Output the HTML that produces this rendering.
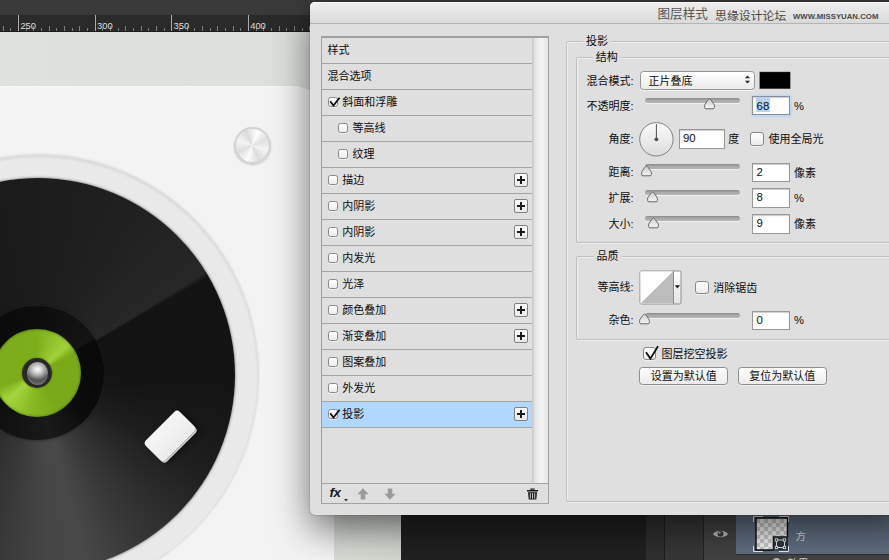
<!DOCTYPE html>
<html lang="zh-CN">
<head>
<meta charset="utf-8">
<title>图层样式</title>
<style>
*{box-sizing:border-box;margin:0;padding:0}
html,body{width:889px;height:560px;overflow:hidden;background:#dde1db}
body{position:relative;font-family:"Liberation Sans","Noto Sans CJK SC",sans-serif;font-size:11px;color:#0e0e0e;line-height:12px}
.abs{position:absolute}
i{display:block}
/* ---------- photoshop backdrop ---------- */
#topbar{left:0;top:0;width:889px;height:15px;background:#3a3a3a}
#canvas{left:0;top:32px;width:401px;height:528px;background:linear-gradient(90deg,#dee2dc 0,#dce0da 300px,#d3d8d1 401px)}
#card{left:-60px;top:87px;width:394px;height:520px;background:#f3f3f3;border-radius:0 44px 0 0;box-shadow:0 -1px 0 #f9f9f9}
#ring{left:-181.5px;top:154.5px;width:439px;height:439px;border-radius:50%;background:radial-gradient(circle at 50% 50%,#e9e9e9 89%,#e7e7e7 92%,#dcdcdc 97%,#d2d2d2 100%);box-shadow:0 0 3px rgba(0,0,0,.22), inset 0 2px 3px rgba(0,0,0,.08)}
#disc{left:-159.5px;top:178px;width:394px;height:394px;border-radius:50%;background:conic-gradient(from 0deg at 50% 50%,#1c1c1c 0deg,#202020 30deg,#272727 58.5deg,#131313 60deg,#141414 95deg,#1e1e1e 120deg,#333 145deg,#484848 166deg,#464646 176deg,#333 200deg,#262626 225deg,#2b2b2b 238.5deg,#141414 240deg,#161616 300deg,#1c1c1c 360deg);box-shadow:0 0 3px rgba(0,0,0,.6)}
#lab0{left:-30px;top:306px;width:134px;height:134px;border-radius:50%;background:conic-gradient(from 0deg,#0c0c0c 0deg,#141414 58deg,#090909 60deg,#0b0b0b 130deg,#1a1a1a 168deg,#0f0f0f 220deg,#0a0a0a 240deg,#0c0c0c 360deg);box-shadow:0 0 3px rgba(0,0,0,.9),0 0 0 1.5px rgba(255,255,255,.05)}
#green{left:-7px;top:329px;width:88px;height:88px;border-radius:50%;background:conic-gradient(from 0deg,#7dae1b 0deg,#a2d238 48deg,#7aaa18 62deg,#79a918 150deg,#88ba22 190deg,#a6d63d 228deg,#7cac1a 250deg,#7dae1b 360deg);box-shadow:inset 0 0 3px rgba(40,70,0,.7)}
#spd{left:22px;top:358px;width:30px;height:30px;border-radius:50%;background:radial-gradient(circle at 50% 50%,#222 0,#2a2a2a 75%,#4d5a2a 100%);box-shadow:0 0 2px rgba(60,90,10,.8)}
#ball{left:26.5px;top:362px;width:21.5px;height:23px;border-radius:50%;background:radial-gradient(ellipse 60% 45% at 50% 32%,#ffffff 0,#d2d2d2 35%,rgba(120,120,120,0) 100%),radial-gradient(circle at 50% 50%,#6d6d6d 0,#555 55%,#8e8e8e 85%,#3a3a3a 100%)}
#knob{left:234px;top:126.5px;width:37px;height:37px;border-radius:50%;background:conic-gradient(from 20deg,#fdfdfd 0deg,#e0e0e0 45deg,#f4f4f4 90deg,#dcdcdc 135deg,#fcfcfc 180deg,#dedede 225deg,#f4f4f4 270deg,#dcdcdc 315deg,#fdfdfd 360deg);border:2px solid #d3d3d3;box-shadow:0 1px 2px rgba(0,0,0,.2)}
#head{left:146.4px;top:421.5px;width:48px;height:28px;border-radius:4px;background:linear-gradient(180deg,#f6f6f6,#ececec);transform:rotate(-45deg);box-shadow:0 2px 0 #c9c9c9,2px 4px 5px rgba(0,0,0,.55)}
/* dark panels at bottom right */
#dk1{left:401px;top:500px;width:245px;height:60px;background:#202020}
#dk2{left:646px;top:500px;width:19px;height:60px;background:#2f2f2f}
#dk3{left:664px;top:500px;width:39px;height:60px;background:#373737;border-left:1px solid #1d1d1d}
#dk4{left:703px;top:500px;width:33px;height:60px;background:#424242;border-left:1px solid #232323}
#lyr{left:736px;top:500px;width:153px;height:54px;background:#606e80}
#lyr2{left:736px;top:554px;width:153px;height:6px;background:#434343;border-top:1px solid #303030}
/* ---------- dialog ---------- */
#dlg{left:310px;top:2px;width:600px;height:513px;background:#dfdfdf;border-radius:5px 0 0 5px;box-shadow:0 14px 36px rgba(0,0,0,.55),0 0 1.5px rgba(0,0,0,.45)}
#tbar{left:0;top:0;width:600px;height:22px;border-radius:5px 0 0 0;background:linear-gradient(180deg,#eeeeee,#dadada);border-bottom:1px solid #b4b4b4;box-shadow:inset 0 1px 0 #f8f8f8}
.ttl{top:5px;left:347.5px;font-size:12.6px;line-height:14px;color:#565656;white-space:nowrap}
.wm1{top:6.8px;left:405px;font-size:11.9px;line-height:14px;color:#484848;white-space:nowrap}
.wm2{top:10.2px;left:482.6px;font-size:7.9px;line-height:10px;color:#4a4a4a;white-space:nowrap;letter-spacing:.02px;font-weight:bold;transform:scaleX(.985);transform-origin:0 0}
/* list */
#list{left:11px;top:34px;width:228px;height:468px;border:1px solid #a2a2a2;border-top:2px solid #a0a0a0;background:#dfdfdf;box-shadow:inset 0 1px 0 #c9c9c9}
#list .row{position:absolute;left:0;width:210px;height:26px;border-bottom:1px solid #a4a4a4;background:#dfdfdf}
#list .row span.t{position:absolute;top:5.7px;white-space:nowrap}
#list .row.sel{background:#b2d7fd}
.cb{position:absolute;width:10px;height:10px;border:1px solid #8a8a8a;border-radius:2.5px;background:linear-gradient(180deg,#ffffff,#ececec);box-shadow:0 1px 0 rgba(255,255,255,.5)}
.cb.big{width:13.5px;height:13.5px;border-radius:3px}
.plus{position:absolute;left:192px;top:5px;width:14px;height:14px;border:1px solid #808080;border-radius:2px;background:linear-gradient(180deg,#fdfdfd,#e9e9e9)}
.plus:before{content:"";position:absolute;left:2px;top:5px;width:8px;height:2px;background:#1c1c1c}
.plus:after{content:"";position:absolute;left:5px;top:2px;width:2px;height:8px;background:#1c1c1c}
#sbar{left:210px;top:0;width:16px;height:445px;background:linear-gradient(90deg,#c6c6c6 0,#e2e2e2 18%,#f1f1f1 45%,#f3f3f3 65%,#e3e3e3 100%)}
#tool{left:0;top:445px;width:226px;height:20px;border-top:1px solid #a4a4a4;background:#dfdfdf}
/* right groups */
.grp{border:1px solid #c0c0c0;border-radius:2px;box-shadow:inset 1px 1px 0 rgba(255,255,255,.5),1px 1px 0 rgba(255,255,255,.5)}
.glab{background:#dfdfdf;padding:0 3px;white-space:nowrap}
.lbl{white-space:nowrap;text-align:right}
.txt{white-space:nowrap}
.inp{background:#fff;border:1px solid #989898;box-shadow:inset 0 1px 1px rgba(0,0,0,.2);font-size:11.4px;line-height:14px;padding:0.8px 0 0 3.6px;height:19px;width:38px}
.trk{height:5px;border-radius:3px;background:linear-gradient(180deg,#8a8a8a,#a9a9a9 45%,#b6b6b6);box-shadow:0 1px 0 rgba(255,255,255,.55)}
.btn{height:18px;border:1px solid #8d8d8d;border-radius:3.5px;background:linear-gradient(180deg,#ffffff,#ececec);text-align:center;padding-top:2.5px;white-space:nowrap;box-shadow:0 1px 0 rgba(255,255,255,.5)}
</style>
</head>
<body>
<div id="canvas" class="abs"></div>
<div id="card" class="abs"></div>
<div id="ring" class="abs"></div>
<div id="disc" class="abs"></div>
<div id="lab0" class="abs"></div>
<div id="green" class="abs"></div>
<div id="spd" class="abs"></div>
<div id="ball" class="abs"></div>
<div id="knob" class="abs"></div>
<div id="head" class="abs"></div>
<div id="topbar" class="abs"></div>
<svg class="abs" style="left:0;top:15px" width="320" height="17" viewBox="0 0 320 17">
<rect width="320" height="17" fill="#2a2a2a"/>
<rect y="16" width="320" height="1" fill="#1a1a1a"/>
<rect x="-5" y="13" width="1" height="3" fill="#7e7e7e"/>
<rect x="3" y="11" width="1" height="5" fill="#7e7e7e"/>
<rect x="10" y="13" width="1" height="3" fill="#7e7e7e"/>
<rect x="18" y="0" width="1" height="16" fill="#ababab"/>
<rect x="26" y="13" width="1" height="3" fill="#7e7e7e"/>
<rect x="33" y="11" width="1" height="5" fill="#7e7e7e"/>
<rect x="41" y="13" width="1" height="3" fill="#7e7e7e"/>
<rect x="49" y="11" width="1" height="5" fill="#7e7e7e"/>
<rect x="56" y="13" width="1" height="3" fill="#7e7e7e"/>
<rect x="64" y="11" width="1" height="5" fill="#7e7e7e"/>
<rect x="72" y="13" width="1" height="3" fill="#7e7e7e"/>
<rect x="79" y="11" width="1" height="5" fill="#7e7e7e"/>
<rect x="87" y="13" width="1" height="3" fill="#7e7e7e"/>
<rect x="95" y="0" width="1" height="16" fill="#ababab"/>
<rect x="102" y="13" width="1" height="3" fill="#7e7e7e"/>
<rect x="110" y="11" width="1" height="5" fill="#7e7e7e"/>
<rect x="118" y="13" width="1" height="3" fill="#7e7e7e"/>
<rect x="125" y="11" width="1" height="5" fill="#7e7e7e"/>
<rect x="133" y="13" width="1" height="3" fill="#7e7e7e"/>
<rect x="141" y="11" width="1" height="5" fill="#7e7e7e"/>
<rect x="148" y="13" width="1" height="3" fill="#7e7e7e"/>
<rect x="156" y="11" width="1" height="5" fill="#7e7e7e"/>
<rect x="164" y="13" width="1" height="3" fill="#7e7e7e"/>
<rect x="171" y="0" width="1" height="16" fill="#ababab"/>
<rect x="179" y="13" width="1" height="3" fill="#7e7e7e"/>
<rect x="187" y="11" width="1" height="5" fill="#7e7e7e"/>
<rect x="194" y="13" width="1" height="3" fill="#7e7e7e"/>
<rect x="202" y="11" width="1" height="5" fill="#7e7e7e"/>
<rect x="210" y="13" width="1" height="3" fill="#7e7e7e"/>
<rect x="217" y="11" width="1" height="5" fill="#7e7e7e"/>
<rect x="225" y="13" width="1" height="3" fill="#7e7e7e"/>
<rect x="233" y="11" width="1" height="5" fill="#7e7e7e"/>
<rect x="240" y="13" width="1" height="3" fill="#7e7e7e"/>
<rect x="248" y="0" width="1" height="16" fill="#ababab"/>
<rect x="256" y="13" width="1" height="3" fill="#7e7e7e"/>
<rect x="263" y="11" width="1" height="5" fill="#7e7e7e"/>
<rect x="271" y="13" width="1" height="3" fill="#7e7e7e"/>
<rect x="279" y="11" width="1" height="5" fill="#7e7e7e"/>
<rect x="286" y="13" width="1" height="3" fill="#7e7e7e"/>
<rect x="294" y="11" width="1" height="5" fill="#7e7e7e"/>
<rect x="302" y="13" width="1" height="3" fill="#7e7e7e"/>
<rect x="309" y="11" width="1" height="5" fill="#7e7e7e"/>
<rect x="317" y="13" width="1" height="3" fill="#7e7e7e"/>
<rect x="324" y="0" width="1" height="16" fill="#ababab"/>
<rect x="332" y="13" width="1" height="3" fill="#7e7e7e"/>
<text x="20.4" y="13.6" font-family="Liberation Sans, sans-serif" font-size="9.4" fill="#dcdcdc">250</text>
<text x="97.0" y="13.6" font-family="Liberation Sans, sans-serif" font-size="9.4" fill="#dcdcdc">300</text>
<text x="173.6" y="13.6" font-family="Liberation Sans, sans-serif" font-size="9.4" fill="#dcdcdc">350</text>
<text x="250.2" y="13.6" font-family="Liberation Sans, sans-serif" font-size="9.4" fill="#dcdcdc">400</text>
</svg>
<div id="dk1" class="abs"></div><div id="dk2" class="abs"></div><div id="dk3" class="abs"></div><div id="dk4" class="abs"></div>
<div id="lyr" class="abs"></div><div id="lyr2" class="abs"></div>
<!-- eye icon -->
<svg class="abs" style="left:712px;top:528px" width="17" height="12" viewBox="0 0 17 12"><path d="M1 6 C3.5 1.8 13.5 1.8 16 6 C13.5 10.2 3.5 10.2 1 6 Z" fill="#b9b9b9"/><circle cx="8.5" cy="5.8" r="2.9" fill="#383838"/><circle cx="7.6" cy="4.8" r="1" fill="#b9b9b9"/></svg>
<!-- layer thumbnail -->
<svg class="abs" style="left:752px;top:515px" width="38" height="38" viewBox="0 0 38 38">
  <defs><pattern id="chk" width="8" height="8" patternUnits="userSpaceOnUse"><rect width="8" height="8" fill="#f2f2f2"/><rect width="4" height="4" fill="#c9c9c9"/><rect x="4" y="4" width="4" height="4" fill="#c9c9c9"/></pattern></defs>
  <path d="M1.5 7 V1.5 H11 M27 1.5 H36.5 V7 M36.5 31 V36.5 H27 M11 36.5 H1.5 V31" fill="none" stroke="#e6e9ee" stroke-width="1"/>
  <rect x="4" y="3" width="31.5" height="32" fill="url(#chk)"/>
  <path d="M4 3 H35.5 V22 H21.5 V35 H4 Z" fill="none" stroke="#0b0b0b" stroke-width="1.4"/>
  <rect x="21.5" y="22" width="14.5" height="13.5" fill="#2c333c"/>
  <rect x="24.5" y="25" width="8" height="7.5" rx="1.5" fill="none" stroke="#e9e9e9" stroke-width="1"/>
  <g fill="#2c333c" stroke="#f2f2f2" stroke-width=".8"><rect x="23.3" y="23.8" width="2.4" height="2.4"/><rect x="31.3" y="23.8" width="2.4" height="2.4"/><rect x="23.3" y="31.3" width="2.4" height="2.4"/><rect x="31.3" y="31.3" width="2.4" height="2.4"/></g>
</svg>
<div class="abs txt" style="left:795.5px;top:529.5px;color:#d3d8de;font-size:10.5px">方</div>
<div class="abs txt" style="left:787.5px;top:557px;color:#cfcfcf;font-size:10.5px">效果</div>
<svg class="abs" style="left:772px;top:556px" width="9" height="6" viewBox="0 0 9 6"><path d="M0.5 5 C2 1 7 1 8.5 5 Z" fill="#b5b5b5"/></svg>

<svg width="0" height="0" style="position:absolute"><defs><linearGradient id="tg" x1="0" y1="0" x2="0" y2="1"><stop offset="0" stop-color="#cfcfcf"/><stop offset="1" stop-color="#f4f4f4"/></linearGradient></defs></svg>
<div id="dlg" class="abs">
  <div id="tbar" class="abs"></div>
  <div class="abs ttl">图层样式</div>
  <div class="abs wm1">思缘设计论坛</div>
  <div class="abs wm2">WWW.MISSYUAN.COM</div>

  <div id="list" class="abs">
    <div class="row" style="top:0px"><span class="t" style="left:5.5px">样式</span></div>
    <div class="row" style="top:26px"><span class="t" style="left:5.5px">混合选项</span></div>
    <div class="row" style="top:52px"><i class="cb" style="left:6px;top:7px"></i><svg class="abs" style="left:6.5px;top:4.5px" width="14" height="13" viewBox="0 0 14 13"><path d="M1.2 6.3 L4.4 10.6 L10.6 2.8" fill="none" stroke="#111" stroke-width="1.8" stroke-linecap="butt" stroke-linejoin="miter"/></svg><span class="t" style="left:20.3px">斜面和浮雕</span></div>
    <div class="row" style="top:78px"><i class="cb" style="left:16px;top:7px"></i><span class="t" style="left:30.6px">等高线</span></div>
    <div class="row" style="top:104px"><i class="cb" style="left:16px;top:7px"></i><span class="t" style="left:30.6px">纹理</span></div>
    <div class="row" style="top:130px"><i class="cb" style="left:6px;top:7px"></i><span class="t" style="left:20.3px">描边</span><i class="plus"></i></div>
    <div class="row" style="top:156px"><i class="cb" style="left:6px;top:7px"></i><span class="t" style="left:20.3px">内阴影</span><i class="plus"></i></div>
    <div class="row" style="top:182px"><i class="cb" style="left:6px;top:7px"></i><span class="t" style="left:20.3px">内阴影</span><i class="plus"></i></div>
    <div class="row" style="top:208px"><i class="cb" style="left:6px;top:7px"></i><span class="t" style="left:20.3px">内发光</span></div>
    <div class="row" style="top:234px"><i class="cb" style="left:6px;top:7px"></i><span class="t" style="left:20.3px">光泽</span></div>
    <div class="row" style="top:260px"><i class="cb" style="left:6px;top:7px"></i><span class="t" style="left:20.3px">颜色叠加</span><i class="plus"></i></div>
    <div class="row" style="top:286px"><i class="cb" style="left:6px;top:7px"></i><span class="t" style="left:20.3px">渐变叠加</span><i class="plus"></i></div>
    <div class="row" style="top:312px"><i class="cb" style="left:6px;top:7px"></i><span class="t" style="left:20.3px">图案叠加</span></div>
    <div class="row" style="top:338px"><i class="cb" style="left:6px;top:7px"></i><span class="t" style="left:20.3px">外发光</span></div>
    <div class="row sel" style="top:364px"><i class="cb" style="left:6px;top:7px"></i><svg class="abs" style="left:6.5px;top:4.5px" width="14" height="13" viewBox="0 0 14 13"><path d="M1.2 6.3 L4.4 10.6 L10.6 2.8" fill="none" stroke="#111" stroke-width="1.8" stroke-linecap="butt" stroke-linejoin="miter"/></svg><span class="t" style="left:20.3px">投影</span><i class="plus"></i></div>
    <div id="sbar" class="abs"></div>
    <div id="tool" class="abs">
      <div class="abs" style="left:7.5px;top:1px;font:italic bold 13.5px/16px 'Liberation Sans',sans-serif;color:#1a1a1a;letter-spacing:-.4px">fx</div>
      <svg class="abs" style="left:21.5px;top:15px" width="4" height="3" viewBox="0 0 4 3"><path d="M0 0 H4 L2 2.4 Z" fill="#333"/></svg>
      <svg class="abs" style="left:34.5px;top:3.5px" width="12" height="12" viewBox="0 0 12 12"><path d="M6 0.3 L11.6 6.2 H8.3 V11.5 H3.7 V6.2 H0.4 Z" fill="#9b9b9b"/></svg>
      <svg class="abs" style="left:61.5px;top:3.5px" width="12" height="12" viewBox="0 0 12 12"><path d="M6 11.7 L11.6 5.8 H8.3 V0.5 H3.7 V5.8 H0.4 Z" fill="#9b9b9b"/></svg>
      <svg class="abs" style="left:203.7px;top:3.8px" width="13" height="12" viewBox="0 0 13 12"><path d="M4.3 0.6 H8.7 V1.8 H4.3 Z M1 2 H12 V3.6 H1 Z M2 4.3 H11 L10.3 11.6 H2.7 Z" fill="#1b1b1b"/><path d="M4.3 5.2 V10.6 M6.5 5.2 V10.6 M8.7 5.2 V10.6" stroke="#dfdfdf" stroke-width=".9"/></svg>
    </div>
  </div>

  <!-- right side -->
  <div class="abs grp" style="left:256px;top:39px;width:360px;height:461px"></div>
  <div class="abs glab" style="left:273px;top:33px">投影</div>
  <div class="abs grp" style="left:266px;top:55px;width:345px;height:186px"></div>
  <div class="abs glab" style="left:282.7px;top:48.8px">结构</div>
  <div class="abs grp" style="left:266px;top:254px;width:345px;height:84px"></div>
  <div class="abs glab" style="left:283.5px;top:248px">品质</div>

  <div class="abs lbl" style="left:237.5px;width:86px;top:72.6px">混合模式:</div>
  <div class="abs lbl" style="left:237.5px;width:86px;top:98.2px">不透明度:</div>
  <div class="abs lbl" style="left:237.5px;width:86px;top:131px">角度:</div>
  <div class="abs lbl" style="left:237.5px;width:86px;top:164.2px">距离:</div>
  <div class="abs lbl" style="left:237.5px;width:86px;top:190.2px">扩展:</div>
  <div class="abs lbl" style="left:237.5px;width:86px;top:216px">大小:</div>
  <div class="abs lbl" style="left:237.5px;width:86px;top:279.2px">等高线:</div>
  <div class="abs lbl" style="left:237.5px;width:86px;top:312.2px">杂色:</div>

  <!-- blend mode select -->
  <div class="abs" style="left:330px;top:69px;width:115px;height:19px;border:1px solid #959595;border-radius:3.5px;background:linear-gradient(180deg,#ffffff,#ebebeb);padding:3px 0 0 7.5px;box-shadow:0 1px 0 rgba(255,255,255,.6)">正片叠底</div>
  <svg class="abs" style="left:434.1px;top:72.8px" width="7" height="10" viewBox="0 0 7 10"><path d="M3.5 0.6 L6.2 3.3 H0.8 Z M3.5 8.4 L6.2 5.7 H0.8 Z" fill="#2a2a2a"/></svg>
  <svg class="abs" style="left:449px;top:69px" width="33" height="19" viewBox="0 0 33 19"><rect x="0.6" y="0.9" width="30.7" height="16.9" fill="#000" stroke="#8a8a8a" stroke-opacity=".5" stroke-width=".6"/></svg>

  <!-- opacity -->
  <div class="abs trk" style="left:335px;top:96px;width:95px"></div>
  <svg class="abs" style="left:393.0px;top:96px" width="13" height="12" viewBox="0 0 13 12"><path d="M6.5 1.2 Q7.3 1.2 8 2.2 L10.9 6.2 Q11.4 6.9 11.4 7.8 L11.4 9.4 Q11.4 10.8 10 10.8 L3 10.8 Q1.6 10.8 1.6 9.4 L1.6 7.8 Q1.6 6.9 2.1 6.2 L5 2.2 Q5.7 1.2 6.5 1.2 Z" fill="url(#tg)" stroke="#696969" stroke-width="1"/></svg>
  <div class="abs" style="left:440.5px;top:93px;width:41px;height:22px;border-radius:3px;background:#c3d8ee;box-shadow:0 0 2px #c3d8ee"></div>
  <div class="abs inp" style="left:442px;top:94.4px;border-color:#85919e"><span style="background:#b5d5fd;padding:1.5px 1px 1px 0.8px;margin-left:-0.8px">68</span></div><div class="abs txt" style="left:484px;top:98px;font-size:11.2px">%</div>

  <!-- angle -->
  <svg class="abs" style="left:327.5px;top:118.5px" width="37" height="37" viewBox="0 0 37 37"><defs><linearGradient id="dg" x1="0" y1="0" x2="0" y2="1"><stop offset="0" stop-color="#fbfbfb"/><stop offset="1" stop-color="#dcdcdc"/></linearGradient></defs><circle cx="18.4" cy="18.3" r="16.7" fill="url(#dg)" stroke="#808080" stroke-width="1"/><path d="M18.4 18.3 V3" stroke="#505050" stroke-width="1"/><circle cx="18.4" cy="18.3" r="1.9" fill="#505050"/></svg>
  <div class="abs inp" style="left:369px;top:127px;width:46px;height:20px;padding-left:3px;padding-top:1.2px">90</div><div class="abs txt" style="left:418.3px;top:131px">度</div>
  <i class="cb big" style="left:440px;top:130px"></i><div class="abs txt" style="left:458.5px;top:131px">使用全局光</div>

  <!-- distance / spread / size -->
  <div class="abs trk" style="left:335px;top:162px;width:95px"></div>
  <svg class="abs" style="left:330.2px;top:162.5px" width="13" height="12" viewBox="0 0 13 12"><path d="M6.5 1.2 Q7.3 1.2 8 2.2 L10.9 6.2 Q11.4 6.9 11.4 7.8 L11.4 9.4 Q11.4 10.8 10 10.8 L3 10.8 Q1.6 10.8 1.6 9.4 L1.6 7.8 Q1.6 6.9 2.1 6.2 L5 2.2 Q5.7 1.2 6.5 1.2 Z" fill="url(#tg)" stroke="#696969" stroke-width="1"/></svg>
  <div class="abs inp" style="left:442px;top:161px">2</div><div class="abs txt" style="left:484px;top:164.5px">像素</div>
  <div class="abs trk" style="left:335px;top:188px;width:95px"></div>
  <svg class="abs" style="left:335.6px;top:188.5px" width="13" height="12" viewBox="0 0 13 12"><path d="M6.5 1.2 Q7.3 1.2 8 2.2 L10.9 6.2 Q11.4 6.9 11.4 7.8 L11.4 9.4 Q11.4 10.8 10 10.8 L3 10.8 Q1.6 10.8 1.6 9.4 L1.6 7.8 Q1.6 6.9 2.1 6.2 L5 2.2 Q5.7 1.2 6.5 1.2 Z" fill="url(#tg)" stroke="#696969" stroke-width="1"/></svg>
  <div class="abs inp" style="left:442px;top:186px;height:20px">8</div><div class="abs txt" style="left:484px;top:189.7px;font-size:11.2px">%</div>
  <div class="abs trk" style="left:335px;top:214px;width:95px"></div>
  <svg class="abs" style="left:337.0px;top:214.5px" width="13" height="12" viewBox="0 0 13 12"><path d="M6.5 1.2 Q7.3 1.2 8 2.2 L10.9 6.2 Q11.4 6.9 11.4 7.8 L11.4 9.4 Q11.4 10.8 10 10.8 L3 10.8 Q1.6 10.8 1.6 9.4 L1.6 7.8 Q1.6 6.9 2.1 6.2 L5 2.2 Q5.7 1.2 6.5 1.2 Z" fill="url(#tg)" stroke="#696969" stroke-width="1"/></svg>
  <div class="abs inp" style="left:442px;top:212px;height:20px">9</div><div class="abs txt" style="left:484px;top:216px">像素</div>

  <!-- quality -->
  <svg class="abs" style="left:328.5px;top:267.5px" width="44" height="36" viewBox="0 0 44 36"><defs><linearGradient id="cg" x1="0" y1="0" x2="0" y2="1"><stop offset="0" stop-color="#ffffff"/><stop offset="1" stop-color="#e4e4e4"/></linearGradient></defs><rect x="1" y="1" width="41" height="33" rx="1.5" fill="url(#cg)" stroke="#8e8e8e"/><rect x="1.5" y="1.5" width="32.5" height="32" fill="#ffffff"/><path d="M34 1.5 V33.5 H1.5 Z" fill="#bcbcbc"/><path d="M34.5 1 V34" stroke="#8e8e8e" stroke-width="1"/><path d="M35.7 15.3 H41.1 L38.4 18.4 Z" fill="#222"/></svg>
  <i class="cb big" style="left:385.3px;top:278.5px"></i><div class="abs txt" style="left:403.2px;top:279.5px">消除锯齿</div>
  <div class="abs trk" style="left:335px;top:310.5px;width:95px"></div>
  <svg class="abs" style="left:328.2px;top:311px" width="13" height="12" viewBox="0 0 13 12"><path d="M6.5 1.2 Q7.3 1.2 8 2.2 L10.9 6.2 Q11.4 6.9 11.4 7.8 L11.4 9.4 Q11.4 10.8 10 10.8 L3 10.8 Q1.6 10.8 1.6 9.4 L1.6 7.8 Q1.6 6.9 2.1 6.2 L5 2.2 Q5.7 1.2 6.5 1.2 Z" fill="url(#tg)" stroke="#696969" stroke-width="1"/></svg>
  <div class="abs inp" style="left:442px;top:309px">0</div><div class="abs txt" style="left:484px;top:312.2px;font-size:11.2px">%</div>

  <i class="cb big" style="left:333.2px;top:345px;width:13px;height:13px"></i>
  <svg class="abs" style="left:334.5px;top:341.5px" width="16" height="16" viewBox="0 0 16 16"><path d="M1 8.2 L5.4 14.6 L13 2.2" fill="none" stroke="#111" stroke-width="1.8"/></svg>
  <div class="abs txt" style="left:351.5px;top:345.5px">图层挖空投影</div>
  <div class="abs btn" style="left:329.4px;top:364.5px;width:88.5px">设置为默认值</div>
  <div class="abs btn" style="left:428px;top:364.5px;width:88.5px">复位为默认值</div>
</div>
</body>
</html>
